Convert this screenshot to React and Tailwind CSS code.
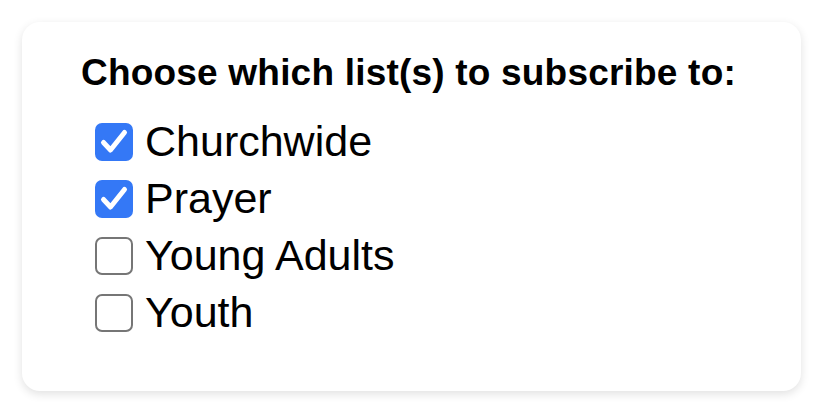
import React, { useState } from "react";

const lists = [
  { key: "churchwide", label: "Churchwide", checked: true },
  { key: "prayer", label: "Prayer", checked: true },
  { key: "young-adults", label: "Young Adults", checked: false },
  { key: "youth", label: "Youth", checked: false },
];

const Box = ({ checked }) =>
  checked ? (
    <span className="block h-[38px] w-[38px] shrink-0 rounded-[7px] bg-[#3478f6]">
      <svg viewBox="0 0 38 38" className="h-[38px] w-[38px]" fill="none">
        <path d="M8.5 19.5L15.5 27L29.5 9.5" stroke="white" strokeWidth="5" strokeLinecap="round" strokeLinejoin="round" />
      </svg>
    </span>
  ) : (
    <span className="block h-[38px] w-[38px] shrink-0 rounded-[7px] border-[2.5px] border-[#767676] bg-white" />
  );

export default function App() {
  const [selected, setSelected] = useState(
    Object.fromEntries(lists.map((l) => [l.key, l.checked]))
  );

  return (
    <div className="min-h-[414px] bg-white p-[22px] font-['Liberation_Sans',Arial,sans-serif] text-black">
      <div className="h-[369px] rounded-[18px] bg-white pl-[59px] pt-[28px] shadow-[0_3px_10px_rgba(0,0,0,0.12)]">
        <h2 className="text-[37px] font-bold leading-[46px] tracking-[0.2px]">
          Choose which list(s) to subscribe to:
        </h2>
        <div className="mt-[17px] flex flex-col pl-[14px]">
          {lists.map((l) => (
            <label
              key={l.key}
              className="flex h-[57px] cursor-pointer items-center gap-[12px]"
              onClick={() => setSelected((s) => ({ ...s, [l.key]: !s[l.key] }))}
            >
              <Box checked={selected[l.key]} />
              <span className="text-[43px] leading-none">{l.label}</span>
            </label>
          ))}
        </div>
      </div>
    </div>
  );
}
